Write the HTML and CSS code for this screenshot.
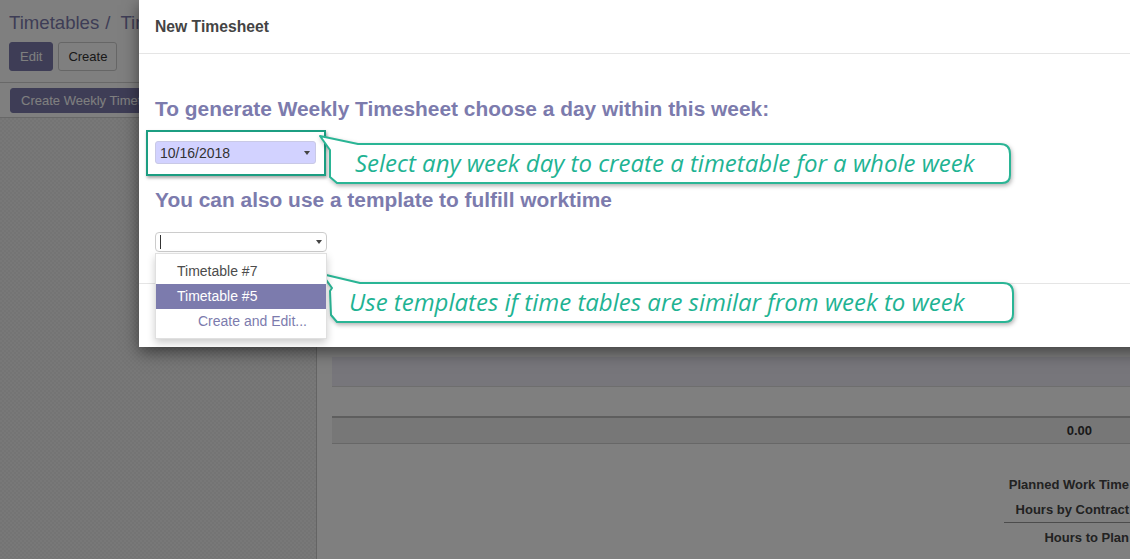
FILE: index.html
```html
<!DOCTYPE html>
<html>
<head>
<meta charset="utf-8">
<title>New Timesheet</title>
<link rel="stylesheet" href="styles.css">
</head>
<body>
<div class="app">
  <div class="cp">
    <div class="breadcrumb"><span class="bc-link">Timetables</span><span class="bc-sep">/</span><span class="bc-cur">Timesheet 2018 Week 42</span></div>
    <div class="cp-buttons">
      <button class="btn btn-primary">Edit</button>
      <button class="btn btn-default">Create</button>
    </div>
  </div>
  <div class="statusbar">
    <button class="btn btn-primary btn-sm">Create Weekly Timetable</button>
  </div>
  <div class="form">
    <div class="side"></div>
    <div class="sheet">
      <div class="sheet-inner">
        <div class="list">
          <div class="list-head"></div>
          <div class="list-row"></div>
          <div class="list-foot"><span class="num">0.00</span></div>
        </div>
        <div class="totals">
          <div class="t-label">Planned Work Time</div><div class="t-val"></div>
          <div class="t-label">Hours by Contract</div><div class="t-val"></div>
          <div class="t-label t-sum">Hours to Plan</div><div class="t-val t-sum"></div>
        </div>
      </div>
    </div>
  </div>
</div>

<div class="backdrop"></div>

<div class="modal">
  <div class="modal-header"><h4 class="modal-title">New Timesheet</h4></div>
  <div class="modal-body">
    <h3 class="m-heading first">To generate Weekly Timesheet choose a day within this week:</h3>
    <div class="highlight">
      <div class="date-input"><span>10/16/2018</span><i class="caret"></i></div>
    </div>
    <h3 class="m-heading second">You can also use a template to fulfill worktime</h3>
    <div class="m2o">
      <span class="cursor"></span><i class="caret"></i>
      <ul class="dropdown">
        <li class="dd-item">Timetable #7</li>
        <li class="dd-item active">Timetable #5</li>
        <li class="dd-item create">Create and Edit...</li>
      </ul>
    </div>
  </div>
  <div class="modal-footer"></div>
</div>

<div class="callout callout-1">
  <svg class="callout-shape" width="700" height="58" viewBox="0 0 700 58">
    <path d="M4 4 L42 12 L684 12 Q694 12 694 22 L694 43 Q694 51 686 51 L21 51 L14 45 L14 18 Z" />
  </svg>
  <span class="callout-text">Select any week day to create a timetable for a whole week</span>
</div>

<div class="callout callout-2">
  <svg class="callout-shape" width="704" height="58" viewBox="0 0 704 58">
    <path d="M6 4 L44 13 L687 13 Q697 13 697 23 L697 44 Q697 52 689 52 L21 52 L15 45 L14 21 L16 18 Z" />
  </svg>
  <span class="callout-text">Use templates if time tables are similar from week to week</span>
</div>
</body>
</html>
```

FILE: styles.css
```css
html, body {
  margin: 0;
  padding: 0;
  width: 1130px;
  height: 559px;
  overflow: hidden;
}
body {
  font-family: "Liberation Sans", Arial, sans-serif;
  font-size: 13px;
  color: #4c4c4c;
  background: #fff;
  position: relative;
}

/* ---------- underlying page ---------- */
.app {
  display: flex;
  flex-direction: column;
  height: 559px;
}
.cp {
  padding: 10px 9px 11px;
  border-bottom: 1px solid #d0d0d0;
  background: #fff;
}
.breadcrumb {
  width: 130px;
  overflow: hidden;
  font-size: 18.6px;
  line-height: 25px;
  white-space: nowrap;
  color: #7c7bad;
}
.bc-sep { margin: 0 10px 0 6px; }
.cp-buttons {
  margin-top: 7px;
  display: flex;
  gap: 5px;
}
.btn {
  font-family: "Liberation Sans", Arial, sans-serif;
  font-size: 13px;
  height: 29px;
  padding: 0 10px;
  border-radius: 3px;
  border: 1px solid transparent;
  cursor: pointer;
}
.btn-primary {
  background: #7c7bad;
  color: #fff;
  border-color: #7c7bad;
}
.btn-default {
  background: #fff;
  color: #333;
  border-color: #ccc;
  padding: 0 9px;
}
.btn-sm {
  height: 25px;
  padding: 0 10px;
}
.statusbar {
  padding: 5px 10px 4px;
  border-bottom: 1px solid #d0d0d0;
  background: #fff;
  display: flex;
}
.form {
  flex: 1;
  display: flex;
  min-height: 0;
}
.side {
  width: 316px;
  flex: none;
  background-color: #eeeeee;
  background-image: repeating-conic-gradient(#f1f1f1 0 25%, #e8e8e8 0 50%);
  background-size: 4px 4px;
}
.sheet {
  flex: 1;
  border-left: 1px solid #c8c8c8;
  background: #fff;
  overflow: hidden;
}
.sheet-inner {
  width: 1000px;
  padding: 239px 0 0 15px;
}
.list-head {
  height: 29px;
  background: #eeedf7;
  border-bottom: 1px solid #dcdcdc;
}
.list-row {
  height: 29px;
  background: #fff;
}
.list-foot {
  height: 25px;
  background: #eeeeee;
  border-top: 2px solid #bdbdbd;
  border-bottom: 1px solid #cfcfcf;
  display: flex;
  justify-content: flex-end;
  align-items: center;
  padding-right: 240px;
}
.num {
  font-weight: bold;
  color: #333;
}
.totals {
  display: grid;
  grid-template-columns: auto 203px;
  justify-content: end;
  margin-top: 28px;
}
.t-label {
  font-weight: bold;
  color: #444;
  text-align: right;
  padding-left: 5px;
  line-height: 25px;
  white-space: nowrap;
}
.t-sum {
  border-top: 1px solid #999;
  line-height: 27px;
  padding-top: 1px;
}

.backdrop {
  position: absolute;
  inset: 0;
  background: rgba(0, 0, 0, 0.5);
}

/* ---------- modal ---------- */
.modal {
  position: absolute;
  left: 139px;
  top: 0;
  width: 1020px;
  background: #fff;
  box-shadow: 0 5px 15px rgba(0, 0, 0, 0.5);
}
.modal-header {
  padding: 16px;
  border-bottom: 1px solid #e5e5e5;
}
.modal-title {
  margin: 0;
  font-size: 15.7px;
  line-height: 21px;
  font-weight: bold;
  color: #444;
}
.modal-body {
  padding: 0 16px 31px;
}
.m-heading {
  margin: 0;
  font-size: 20.9px;
  line-height: 24px;
  font-weight: bold;
  color: #7c7bad;
}
.m-heading.first { margin: 43px 0 9px; }
.m-heading.second { margin: 12px 0 20px; }

.highlight {
  margin-left: -9px;
  width: 180px;
  box-sizing: border-box;
  border: 2px solid #1c9e82;
  padding: 9px 8px 10px 7px;
  box-shadow: 1px 2px 3px rgba(0, 0, 0, 0.35);
}
.date-input {
  height: 23px;
  box-sizing: border-box;
  background: #d2d2ff;
  border: 1px solid #c9c9e6;
  border-radius: 3px;
  display: flex;
  align-items: center;
  justify-content: space-between;
  padding: 0 5px 0 4px;
  font-size: 14px;
  color: #333;
}
.caret {
  width: 0;
  height: 0;
  border-top: 4px solid #444;
  border-left: 3px solid transparent;
  border-right: 3px solid transparent;
}

.m2o {
  position: relative;
  width: 172px;
  height: 20px;
  box-sizing: border-box;
  border: 1px solid #ccc;
  border-radius: 4px;
  display: flex;
  align-items: center;
  justify-content: space-between;
  padding: 0 4px 0 4px;
}
.cursor {
  width: 1px;
  height: 14px;
  background: #333;
}
.dropdown {
  position: absolute;
  top: 20px;
  left: -1px;
  width: 172px;
  box-sizing: border-box;
  margin: 0;
  padding: 5px 0 4px;
  list-style: none;
  background: #fff;
  border: 1px solid rgba(0, 0, 0, 0.12);
  box-shadow: 0 4px 8px rgba(0, 0, 0, 0.2);
  z-index: 2;
}
.dd-item {
  height: 25px;
  line-height: 25px;
  padding-left: 21px;
  font-size: 14px;
  color: #4c4c4c;
  white-space: nowrap;
}
.dd-item.active {
  background: #7c7bad;
  color: #fff;
}
.dd-item.create {
  padding-left: 42px;
  color: #7c7bad;
}
.modal-footer {
  height: 63px;
  border-top: 1px solid #e5e5e5;
}

/* ---------- callouts ---------- */
.callout {
  position: absolute;
  height: 58px;
  display: flex;
  align-items: center;
}
.callout-shape {
  position: absolute;
  left: 0;
  top: 0;
  filter: drop-shadow(1px 2px 2px rgba(0, 0, 0, 0.3));
}
.callout-shape path {
  fill: #fff;
  stroke: #2ab595;
  stroke-width: 2;
  stroke-linejoin: round;
}
.callout-text {
  position: relative;
  font-family: "Open Sans", "Noto Sans", sans-serif;
  font-style: italic;
  font-size: 24px;
  color: #1fb393;
  white-space: nowrap;
}
.callout-1 {
  left: 316px;
  top: 132px;
  width: 700px;
}
.callout-1 .callout-text {
  margin-left: 39px;
  margin-top: 3px;
}
.callout-2 {
  left: 316px;
  top: 270px;
  width: 704px;
}
.callout-2 .callout-text {
  margin-left: 33px;
  margin-top: 5px;
}
```
